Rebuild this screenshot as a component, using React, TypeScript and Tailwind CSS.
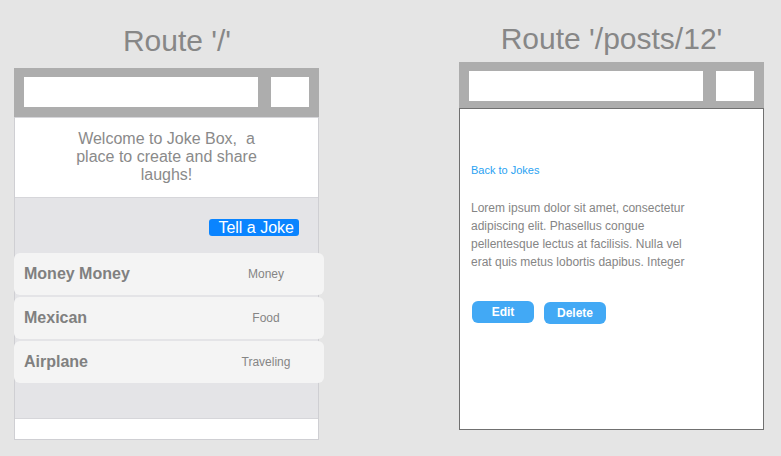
import React from 'react';

const jokes = [
  { title: 'Money Money', category: 'Money' },
  { title: 'Mexican', category: 'Food' },
  { title: 'Airplane', category: 'Traveling' },
];

const BrowserBar: React.FC<{ height: string }> = ({ height }) => (
  <div className={`flex ${height} bg-[#adadad] px-[10px] pt-[9px] gap-[13px]`}>
    <div className="h-[30px] w-[234px] bg-white" />
    <div className="h-[30px] w-[38px] bg-white" />
  </div>
);

const App: React.FC = () => {
  return (
    <div
      className="flex w-[781px] h-[456px] bg-[#e5e5e5] overflow-hidden"
      style={{ fontFamily: '"Liberation Sans", Arial, sans-serif' }}
    >
      {/* Home route */}
      <div className="ml-[14px] w-[305px] flex flex-col pt-[24px]">
        <h1 className="h-[34px] leading-[34px] pl-[21px] text-center text-[30px] text-[#878787] mb-[10px]">
          Route '/'
        </h1>
        <BrowserBar height="h-[49px]" />
        <div className="flex flex-col border-x border-b border-[#cfcfd3]">
          <div className="h-[81px] bg-white border-t border-b border-[#d6d6da] pt-[12px] text-center text-[16px] leading-[18px] text-[#8a8a8a]">
            Welcome to Joke Box,&nbsp; a<br />
            place to create and share<br />
            laughs!
          </div>
          <div className="h-[220px] bg-[#e4e4e7] flex flex-col">
            <div className="flex justify-end pr-[19px] pt-[21px]">
              <button className="h-[17px] pl-[9px] pr-[5px] rounded-[3px] bg-[#0a84ff] text-white text-[16px] leading-[17px]">
                Tell a Joke
              </button>
            </div>
            <div className="mt-[17px] flex flex-col gap-[2px] -ml-px w-[310px]">
              {jokes.map((j) => (
                <div
                  key={j.title}
                  className="h-[42px] rounded-[6px] bg-[#f4f4f4] flex items-center pl-[10px]"
                >
                  <span className="flex-1 text-[16px] font-bold text-[#808080]">{j.title}</span>
                  <span className="w-[80px] mr-[18px] text-center text-[12px] text-[#858585]">
                    {j.category}
                  </span>
                </div>
              ))}
            </div>
          </div>
          <div className="h-[21px] bg-white border-t border-[#d6d6da]" />
        </div>
      </div>

      {/* Post route */}
      <div className="ml-[140px] w-[305px] flex flex-col pt-[22px]">
        <h1 className="h-[34px] leading-[34px] text-center text-[30px] text-[#878787] mb-[6px]">
          Route '/posts/12'
        </h1>
        <BrowserBar height="h-[46px]" />
        <div className="h-[322px] bg-white border border-[#707070] pl-[11px] pt-[55px] flex flex-col">
          <a className="text-[11px] leading-[13px] text-[#2aa2f2]">Back to Jokes</a>
          <p className="mt-[22px] text-[12px] leading-[18px] text-[#858585]">
            Lorem ipsum dolor sit amet, consectetur<br />
            adipiscing elit. Phasellus congue<br />
            pellentesque lectus at facilisis. Nulla vel<br />
            erat quis metus lobortis dapibus. Integer
          </p>
          <div className="mt-[30px] flex items-start gap-[10px] pl-px">
            <button className="h-[22px] w-[62px] rounded-[6px] bg-[#42a9f5] text-white text-[12px] font-bold leading-[22px]">
              Edit
            </button>
            <button className="mt-px h-[22px] w-[62px] rounded-[6px] bg-[#42a9f5] text-white text-[12px] font-bold leading-[22px]">
              Delete
            </button>
          </div>
        </div>
      </div>
    </div>
  );
};

export default App;
